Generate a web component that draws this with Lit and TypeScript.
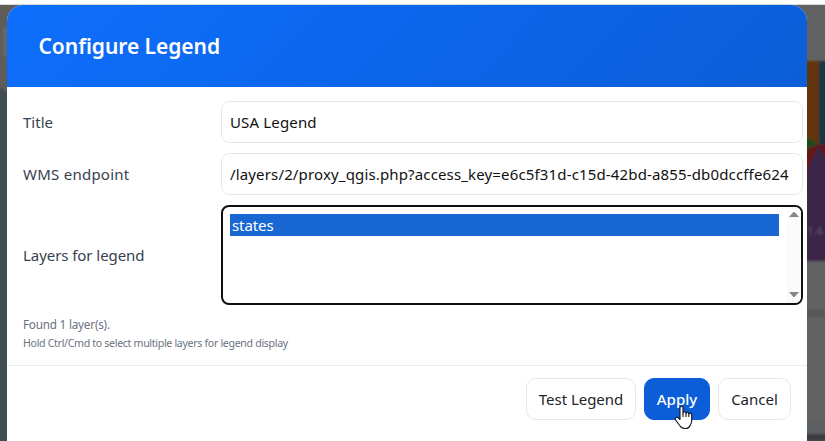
import { LitElement, html, css, svg } from "lit";
import { customElement } from "lit/decorators.js";

const backdrop = svg`
  <defs>
    <filter id="soft" x="-20%" y="-20%" width="140%" height="140%"><feGaussianBlur stdDeviation="1" /></filter>
  </defs>
  <rect width="825" height="441" fill="#626262" />
  <g filter="url(#soft)">
    <rect x="-5" y="-5" width="30" height="100" fill="#5f5d5a" />
    <rect x="3" y="27" width="20" height="29" fill="#696866" />
    <path d="M-6 86 Q4 88 14 98 V450 H-6Z" fill="#404e52" />
    <rect x="800" y="61" width="19" height="100" fill="#633408" />
    <rect x="819" y="61" width="15" height="86" fill="#153449" />
    <path d="M800 132 L819 145 L800 154Z" fill="#1d4a1d" />
    <path d="M800 151 L820 144 L835 148 V175 H800Z" fill="#651718" />
    <path d="M800 190 L811 161 L819 146 L835 172 V261 H800Z" fill="#3a284a" />
    <rect x="800" y="309" width="30" height="8" fill="#595959" />
    <rect x="800" y="422" width="30" height="12" fill="#5c6164" />
    <rect x="800" y="434" width="30" height="7" fill="#3a3d40" />
  </g>
  <text x="807" y="235" font-size="11" fill="#62576b" filter="url(#soft)">1.4</text>
  <rect width="825" height="4" fill="#fff" />
  <rect y="4" width="825" height="1" fill="#d9d9d9" />
`;

@customElement("legend-dialog")
class LegendDialog extends LitElement {
  static styles = css`
    :host {
      display: flex;
      flex-direction: column;
      box-sizing: border-box;
      width: 800px;
      height: 436px;
      background: #fff;
      border-radius: 16px 16px 0 0;
      overflow: hidden;
      color: #374151;
      font-size: 15px;
      line-height: 22px;
    }
    .header {
      flex: none;
      box-sizing: border-box;
      height: 82px;
      padding: 0 31.5px;
      display: flex;
      align-items: center;
      background: linear-gradient(135deg, #0d6efd 0%, #0b5ed7 100%);
      color: #fff;
      font-size: 21px;
      font-weight: 600;
      letter-spacing: -0.04px;
    }
    .form {
      display: grid;
      grid-template-columns: 198px 582px;
      grid-template-rows: 42px 42px 100px;
      row-gap: 10px;
      align-items: center;
      padding: 14px 4px 0 16px;
    }
    .field {
      box-sizing: border-box;
      height: 42px;
      padding: 0 8px;
      display: flex;
      align-items: center;
      border: 1px solid #e5e7eb;
      border-radius: 8px;
      color: #111;
      white-space: nowrap;
      letter-spacing: 0.15px;
    }
    .endpoint { letter-spacing: 0.25px; }
    .layers { letter-spacing: -0.06px; }
    .list {
      box-sizing: border-box;
      height: 100px;
      border: 2px solid #101010;
      border-radius: 8px;
      display: flex;
      overflow: hidden;
    }
    .options {
      flex: 1;
      padding: 7px 8px 0 7px;
    }
    .option {
      height: 22px;
      padding-left: 2px;
      background: #1967d2;
      color: #fff;
      letter-spacing: -0.1px;
    }
    .scroll {
      width: 14px;
      background: #fbfbfb;
      display: flex;
      flex-direction: column;
      align-items: center;
      justify-content: space-between;
      padding: 5px 0 6px;
    }
    .scroll svg { display: block; }
    .hints {
      padding: 9px 16px 0;
      color: #6b7280;
      font-size: 11.7px;
      line-height: 20px;
      height: 51px;
      letter-spacing: -0.2px;
    }
    .small {
      padding-top: 1px;
      font-size: 10.6px;
      line-height: 16px;
      letter-spacing: -0.315px;
    }
    .footer {
      display: flex;
      justify-content: flex-end;
      gap: 8px;
      border-top: 1px solid #eceef0;
      padding: 12px 16px 0;
    }
    .button {
      box-sizing: border-box;
      height: 42px;
      border: 1px solid #e5e7eb;
      border-radius: 10px;
      display: flex;
      align-items: center;
      justify-content: center;
      color: #212529;
      white-space: nowrap;
    }
    .test {
      width: 110px;
      letter-spacing: -0.03px;
    }
    .apply {
      width: 66px;
      background: #0b5ed7;
      border-color: #0b5ed7;
      color: #fff;
      font-weight: 500;
      position: relative;
    }
    .cancel { width: 73px; }
    .pointer {
      position: absolute;
      left: 29px;
      top: 26px;
    }
  `;

  render() {
    return html`
      <div class="header">Configure Legend</div>
      <div class="form">
        <span>Title</span>
        <div class="field">USA Legend</div>
        <span class="endpoint">WMS endpoint</span>
        <div class="field">/layers/2/proxy_qgis.php?access_key=e6c5f31d-c15d-42bd-a855-db0dccffe624</div>
        <span class="layers">Layers for legend</span>
        <div class="list">
          <div class="options"><div class="option">states</div></div>
          <div class="scroll">
            <svg width="10" height="5" viewBox="0 0 10 5"><path d="M0 5 L4 .6 Q5 -.4 6 .6 L10 5Z" fill="#858585" /></svg>
            <svg width="10" height="5" viewBox="0 0 10 5"><path d="M0 0 L4 4.4 Q5 5.4 6 4.4 L10 0Z" fill="#858585" /></svg>
          </div>
        </div>
      </div>
      <div class="hints">
        <div>Found 1 layer(s).</div>
        <div class="small">Hold Ctrl/Cmd to select multiple layers for legend display</div>
      </div>
      <div class="footer">
        <div class="button test">Test Legend</div>
        <div class="button apply">
          Apply
          <svg class="pointer" width="19" height="25" viewBox="0 0 19 25">
            <path d="M6 14.5 V3 Q6 1.3 7.5 1.3 Q9 1.3 9 3 V8 Q9 6.8 10.5 6.8 Q12 6.8 12 8.3 Q12.2 7.2 13.4 7.2 Q14.8 7.3 14.8 8.8 Q15 8 16.2 8.1 Q17.7 8.3 17.7 10 V15.5 Q17.7 18 16.3 20 Q15.4 23.5 11 23.5 Q7.5 23.5 5.7 20.5 L1.3 14.7 Q.7 13 2.3 12.3 Q3.6 12 4.5 13Z" fill="#fff" stroke="#15151f" stroke-width="1.1" stroke-linejoin="round" />
            <path d="M9 7.5 V12 M12 8 V12 M14.8 8.5 V12" stroke="#15151f" stroke-width="1.1" fill="none" />
          </svg>
        </div>
        <div class="button cancel">Cancel</div>
      </div>
    `;
  }
}

@customElement("app-root")
class AppRoot extends LitElement {
  static styles = css`
    :host {
      display: block;
      position: relative;
      box-sizing: border-box;
      width: 825px;
      height: 441px;
      padding: 5px 0 0 7px;
      overflow: hidden;
      font-family: "Noto Sans", "Open Sans", sans-serif;
    }
    .backdrop {
      position: absolute;
      left: 0;
      top: 0;
    }
    legend-dialog { position: relative; }
  `;

  render() {
    return html`
      <svg class="backdrop" width="825" height="441" viewBox="0 0 825 441">${backdrop}</svg>
      <legend-dialog></legend-dialog>
    `;
  }
}
